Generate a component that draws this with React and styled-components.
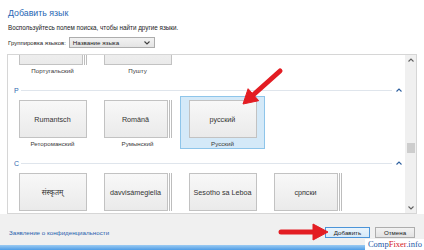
import React from "react";
import styled, { createGlobalStyle } from "styled-components";

const GlobalStyle = createGlobalStyle`
  html, body {
    margin: 0;
    padding: 0;
    background: #ffffff;
    overflow: hidden;
  }
  * {
    box-sizing: border-box;
  }
`;

// the list is scrolled: tile faces of the first row and labels of the last
// row lie outside the viewport, so they are left empty
const groups = [
  {
    letter: null,
    items: [
      { id: "pt", native: "", name: "Португальский", stacked: true },
      { id: "ps", native: "", name: "Пушту" },
    ],
  },
  {
    letter: "Р",
    items: [
      { id: "rm", native: "Rumantsch", name: "Ретороманский" },
      { id: "ro", native: "Română", name: "Румынский", stacked: true },
      { id: "ru", native: "русский", name: "Русский", selected: true },
    ],
  },
  {
    letter: "С",
    items: [
      { id: "sa", native: "संस्कृतम्" },
      { id: "se", native: "davvisámegiella", stacked: true },
      { id: "nso", native: "Sesotho sa Leboa" },
      { id: "sr", native: "српски", stacked: true },
    ],
  },
];

function Chevron({ up, color = "#606060" }) {
  return (
    <svg width="6" height="4" viewBox="0 0 6 4">
      <path
        d={up ? "M0.5 3.5 L3 1 L5.5 3.5" : "M0.5 0.5 L3 3 L5.5 0.5"}
        fill="none"
        stroke={color}
        strokeWidth="1.1"
      />
    </svg>
  );
}

function App() {
  return (
    <>
      <GlobalStyle />
      <Window>
        <Header>
          <Title>Добавить язык</Title>
          <Hint>Воспользуйтесь полем поиска, чтобы найти другие языки.</Hint>
          <GroupRow>
            <GroupLabel>Группировка языков:</GroupLabel>
            <Combo>
              <span>Название языка</span>
              <Chevron color="#404040" />
            </Combo>
          </GroupRow>
        </Header>

        <Panel>
          <Viewport>
            <Content>
              {groups.map((group, gi) => (
                <React.Fragment key={gi}>
                  {group.letter && (
                    <SectionHeader>
                      <Letter>{group.letter}</Letter>
                      <Rule />
                      <Chevron up color="#2d5f9e" />
                    </SectionHeader>
                  )}
                  <TileRow>
                    {group.items.map((item) => (
                      <Cell key={item.id} $selected={item.selected}>
                        <Tile $stacked={item.stacked}>{item.native}</Tile>
                        {item.name && <TileLabel>{item.name}</TileLabel>}
                      </Cell>
                    ))}
                  </TileRow>
                </React.Fragment>
              ))}
            </Content>
          </Viewport>
          <ScrollBar>
            <ScrollArrow>
              <Chevron up />
            </ScrollArrow>
            <Track>
              <Thumb $offset={78} />
            </Track>
            <ScrollArrow>
              <Chevron />
            </ScrollArrow>
          </ScrollBar>
        </Panel>

        <Footer>
          <PrivacyLink>Заявление о конфиденциальности</PrivacyLink>
          <Buttons>
            <Button $primary>Добавить</Button>
            <Button>Отмена</Button>
          </Buttons>
        </Footer>
        <TaskStrip />

        <Arrows width="424" height="250" viewBox="0 0 424 250">
          <g fill="#e31d23" stroke="#e31d23">
            <line x1="280" y1="71" x2="252" y2="96" strokeWidth="5" strokeLinecap="round" />
            <polygon points="243,104 258.7,100.7 248.1,88.7" strokeWidth="1" strokeLinejoin="round" />
            <line x1="281" y1="232" x2="315" y2="232" strokeWidth="5" strokeLinecap="round" />
            <polygon points="328,232 313,224 313,240" strokeWidth="1" strokeLinejoin="round" />
          </g>
        </Arrows>

        <Watermark>
          <WmPart $color="#1d58a8">Comp</WmPart>
          <WmPart $color="#d52027">Fixer</WmPart>
          <WmPart $color="#1d58a8">.info</WmPart>
        </Watermark>
      </Window>
    </>
  );
}

const Window = styled.div`
  position: relative;
  width: 424px;
  height: 250px;
  display: flex;
  flex-direction: column;
  background: #ffffff;
  font-family: "Liberation Sans", "Noto Sans", sans-serif;
  color: #222;
  overflow: hidden;
`;

const Header = styled.div`
  display: flex;
  flex-direction: column;
  padding: 7px 8px 0 8px;
  height: 54px;
`;

const Title = styled.div`
  font-size: 8.8px;
  line-height: 12px;
  color: #2766b4;
`;

const Hint = styled.div`
  margin-top: 4px;
  font-size: 6.3px;
  line-height: 10px;
  color: #222;
  white-space: nowrap;
`;

const GroupRow = styled.div`
  margin-top: 4px;
  display: flex;
  align-items: center;
  gap: 3px;
  height: 11px;
`;

const GroupLabel = styled.div`
  flex-shrink: 0;
  font-size: 6px;
  color: #222;
  white-space: nowrap;
`;

const Combo = styled.div`
  width: 86px;
  height: 11px;
  display: flex;
  align-items: center;
  justify-content: space-between;
  padding: 0 4px 0 3px;
  border: 1px solid #adadad;
  background: linear-gradient(#f2f2f2, #e4e4e4);
  font-size: 6.2px;
  color: #222;
`;

const Panel = styled.div`
  margin: 0 7px;
  height: 160px;
  display: flex;
  border: 1px solid #d6d6d6;
`;

const Viewport = styled.div`
  flex: 1;
  overflow: hidden;
`;

const Content = styled.div`
  margin-top: -32px;
  display: flex;
  flex-direction: column;
`;

const SectionHeader = styled.div`
  margin-top: 8px;
  height: 12px;
  display: flex;
  align-items: center;
  padding: 0 3px 0 6px;
`;

const Letter = styled.span`
  font-size: 7px;
  color: #2d68b0;
`;

const Rule = styled.div`
  flex: 1;
  height: 1px;
  margin: 0 4px 0 2px;
  background: #dfe5ec;
`;

const TileRow = styled.div`
  display: flex;
  padding-left: 2px;
`;

const Cell = styled.div`
  width: 85px;
  height: 53px;
  display: flex;
  flex-direction: column;
  align-items: center;
  padding-top: 3px;
  border: 1px solid ${(p) => (p.$selected ? "#8ec5ea" : "transparent")};
  background: ${(p) => (p.$selected ? "#d4e9f8" : "transparent")};
`;

const Tile = styled.div`
  width: ${(p) => (p.$stacked ? "64px" : "68px")};
  margin-right: ${(p) => (p.$stacked ? "4px" : "0")};
  height: 38px;
  flex-shrink: 0;
  display: flex;
  align-items: center;
  justify-content: center;
  border: 1px solid #c2c2c2;
  background: linear-gradient(#f8f8f8, #eaeaea);
  font-family: "Liberation Sans", "Noto Sans", "Noto Sans Devanagari", sans-serif;
  font-size: 7.2px;
  color: #333;
  white-space: nowrap;
  box-shadow: ${(p) =>
    p.$stacked
      ? "1px 0 0 #ffffff, 2px 0 0 #bdbdbd, 3px 0 0 #ffffff, 4px 0 0 #bdbdbd"
      : "none"};
`;

const TileLabel = styled.div`
  margin-top: 2px;
  font-size: 6.2px;
  line-height: 8px;
  color: #3a3a3a;
  white-space: nowrap;
`;

const ScrollBar = styled.div`
  width: 11px;
  display: flex;
  flex-direction: column;
  background: #f0f0f0;
`;

const ScrollArrow = styled.div`
  height: 10px;
  display: flex;
  align-items: center;
  justify-content: center;
`;

const Track = styled.div`
  flex: 1;
  display: flex;
  justify-content: center;
`;

const Thumb = styled.div`
  margin-top: ${(p) => p.$offset}px;
  width: 8px;
  height: 10px;
  background: #cdcdcd;
`;

const Footer = styled.div`
  height: 31px;
  display: flex;
  align-items: center;
  justify-content: space-between;
  padding: 5px 9px 0 9px;
  background: #f0f0f0;
`;

const PrivacyLink = styled.a`
  font-size: 6.2px;
  color: #2a62ad;
  cursor: pointer;
`;

const Buttons = styled.div`
  display: flex;
  gap: 5px;
`;

const Button = styled.button`
  width: ${(p) => (p.$primary ? "45px" : "40px")};
  height: 11px;
  padding: 0;
  display: flex;
  align-items: center;
  justify-content: center;
  font-family: "Liberation Sans", "Noto Sans", sans-serif;
  font-size: 6.2px;
  color: #222;
  border: 1px solid ${(p) => (p.$primary ? "#4c94d8" : "#adadad")};
  background: ${(p) =>
    p.$primary
      ? "linear-gradient(#eaf4fc, #d6e9f8)"
      : "linear-gradient(#f2f2f2, #e2e2e2)"};
`;

const TaskStrip = styled.div`
  height: 5px;
  background: linear-gradient(#9ccbf2, #4f9de6);
`;

const Arrows = styled.svg`
  position: absolute;
  left: 0;
  top: 0;
  pointer-events: none;
`;

const Watermark = styled.div`
  position: absolute;
  right: 0;
  bottom: 0;
  padding: 0 2px 0 3px;
  height: 11px;
  line-height: 11px;
  background: #ffffff;
  font-family: "Liberation Serif", "DejaVu Serif", serif;
  font-size: 8.5px;
`;

const WmPart = styled.span`
  color: ${(p) => p.$color};
`;

export default App;
